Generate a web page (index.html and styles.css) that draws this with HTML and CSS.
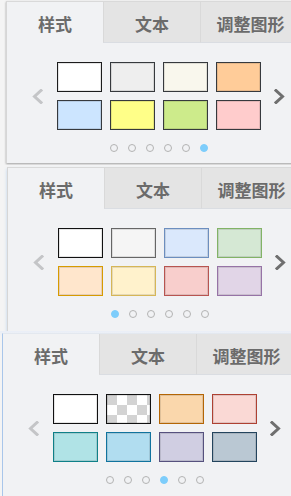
FILE: index.html
```html
<!DOCTYPE html>
<html>
<head>
    <meta charset="UTF-8">
    <meta name="viewport" content="width=device-width, initial-scale=1.0">
    <title>样式面板</title>
    <link rel="stylesheet" href="styles.css">
</head>
<body>

<!-- shot 1: page 6 of the style presets -->
<div class="shot shot-a">
    <div class="panel">
        <div class="tabs">
            <div class="tab active">样式</div>
            <div class="tab">文本</div>
            <div class="tab">调整图形</div>
        </div>
        <div class="styles">
            <span class="arrow prev"><svg width="11" height="15" viewBox="0 0 11 15"><polyline points="9,1.5 2.5,7.5 9,13.5"/></svg></span>
            <div class="swatches">
                <div class="swatch c-white"></div>
                <div class="swatch c-grey"></div>
                <div class="swatch c-cream"></div>
                <div class="swatch c-peach"></div>
                <div class="swatch c-sky"></div>
                <div class="swatch c-lemon"></div>
                <div class="swatch c-lime"></div>
                <div class="swatch c-rose"></div>
            </div>
            <span class="arrow next"><svg width="11" height="15" viewBox="0 0 11 15"><polyline points="2,1.5 8.5,7.5 2,13.5"/></svg></span>
        </div>
        <div class="dots">
            <span class="dot"></span><span class="dot"></span><span class="dot"></span>
            <span class="dot"></span><span class="dot"></span><span class="dot on"></span>
        </div>
    </div>
</div>

<!-- shot 2: page 1 -->
<div class="shot shot-b">
    <div class="panel">
        <div class="tabs">
            <div class="tab active">样式</div>
            <div class="tab">文本</div>
            <div class="tab">调整图形</div>
        </div>
        <div class="styles">
            <span class="arrow prev"><svg width="11" height="15" viewBox="0 0 11 15"><polyline points="9,1.5 2.5,7.5 9,13.5"/></svg></span>
            <div class="swatches">
                <div class="swatch d-white"></div>
                <div class="swatch d-grey"></div>
                <div class="swatch d-blue"></div>
                <div class="swatch d-green"></div>
                <div class="swatch d-orange"></div>
                <div class="swatch d-yellow"></div>
                <div class="swatch d-red"></div>
                <div class="swatch d-purple"></div>
            </div>
            <span class="arrow next"><svg width="11" height="15" viewBox="0 0 11 15"><polyline points="2,1.5 8.5,7.5 2,13.5"/></svg></span>
        </div>
        <div class="dots">
            <span class="dot on"></span><span class="dot"></span><span class="dot"></span>
            <span class="dot"></span><span class="dot"></span><span class="dot"></span>
        </div>
    </div>
</div>

<!-- shot 3: page 4 -->
<div class="shot shot-c">
    <div class="panel">
        <div class="tabs">
            <div class="tab active">样式</div>
            <div class="tab">文本</div>
            <div class="tab">调整图形</div>
        </div>
        <div class="styles">
            <span class="arrow prev"><svg width="11" height="15" viewBox="0 0 11 15"><polyline points="9,1.5 2.5,7.5 9,13.5"/></svg></span>
            <div class="swatches">
                <div class="swatch e-white"></div>
                <div class="swatch e-none"></div>
                <div class="swatch e-orange"></div>
                <div class="swatch e-red"></div>
                <div class="swatch e-teal"></div>
                <div class="swatch e-blue"></div>
                <div class="swatch e-violet"></div>
                <div class="swatch e-slate"></div>
            </div>
            <span class="arrow next"><svg width="11" height="15" viewBox="0 0 11 15"><polyline points="2,1.5 8.5,7.5 2,13.5"/></svg></span>
        </div>
        <div class="dots">
            <span class="dot"></span><span class="dot"></span><span class="dot"></span>
            <span class="dot on"></span><span class="dot"></span><span class="dot"></span>
        </div>
    </div>
</div>

</body>
</html>
```

FILE: styles.css
```css
html, body {
    margin: 0;
    padding: 0;
    overflow: hidden;
}

body {
    width: 291px;
    height: 496px;
    background: #f4f4f4;
    font-family: "Noto Sans CJK SC", "Noto Sans", sans-serif;
}

.shot {
    overflow: hidden;
}

.shot-a {
    height: 165px;
    padding: 1px 0 0 6px;
    box-sizing: border-box;
}

.shot-b {
    height: 166px;
    padding: 2px 0 0 7px;
    box-sizing: border-box;
}

.shot-c {
    height: 165px;
    padding: 2px 0 0 2px;
    box-sizing: border-box;
    background: linear-gradient(#e9eef7, #f4f4f4 6px);
}

.panel {
    width: 304px;
    background: #f1f2f4;
    border-top: 1px solid #d9d9d9;
    border-left: 1px solid #d6d6d6;
    box-sizing: border-box;
}

.shot-a .panel {
    height: 162px;
    box-shadow: 0 1px 2px rgba(0, 0, 0, 0.35);
}

.shot-b .panel {
    height: 164px;
    box-shadow: 0 2px 3px rgba(120, 170, 230, 0.45);
}

.shot-c .panel {
    height: 164px;
    border-left-color: #a9c6ea;
    border-top-color: #e3e8ef;
    border-bottom: 1px solid #a9c6ea;
}

/* tabs */
.tabs {
    display: flex;
    height: 41px;
}

.tab {
    width: 97px;
    flex: none;
    display: flex;
    align-items: center;
    justify-content: center;
    padding-top: 2px;
    box-sizing: border-box;
    font-size: 17px;
    font-weight: bold;
    color: #6b6b6b;
    background: #e4e4e4;
    border-left: 1px solid #d9d9d9;
    border-bottom: 1px solid #dadde2;
}

.tab.active {
    background: #f1f2f4;
    border-left: none;
    border-bottom: none;
    width: 96px;
}

.tab:last-child {
    width: 100px;
}

/* preset swatches */
.styles {
    display: flex;
    align-items: center;
    justify-content: center;
    gap: 13px;
    margin-top: 19px;
}

.arrow svg {
    display: block;
    fill: none;
    stroke-width: 3;
    stroke-linecap: square;
}

.arrow.prev {
    margin-right: 1px;
}

.arrow.prev svg {
    stroke: #c4c5c7;
}

.arrow.next svg {
    stroke: #6f6f6f;
}

.swatches {
    display: grid;
    grid-template-columns: repeat(4, 45px);
    grid-auto-rows: 30px;
    column-gap: 8px;
    row-gap: 8px;
}

.swatch {
    box-sizing: border-box;
    border: 1px solid #36393d;
    box-shadow: inset 0 0 0 1px rgba(0, 0, 0, 0.1);
}

.c-white { background: #ffffff; border-color: #1c1c1c; }
.c-grey { background: #eeeeee; }
.c-cream { background: #f9f7ed; }
.c-peach { background: #ffcc99; }
.c-sky { background: #cce5ff; }
.c-lemon { background: #ffff88; }
.c-lime { background: #cdeb8b; }
.c-rose { background: #ffcccc; }

.d-white { background: #ffffff; border-color: #111111; }
.d-grey { background: #f5f5f5; border-color: #666666; }
.d-blue { background: #dae8fc; border-color: #6c8ebf; }
.d-green { background: #d5e8d4; border-color: #82b366; }
.d-orange { background: #ffe6cc; border-color: #d79b00; }
.d-yellow { background: #fff2cc; border-color: #d6b656; }
.d-red { background: #f8cecc; border-color: #b85450; }
.d-purple { background: #e1d5e7; border-color: #9673a6; }

.e-white { background: #ffffff; border-color: #111111; }
.e-none {
    border-color: #111111;
    background-color: #ffffff;
    background-image: conic-gradient(#ffffff 25%, #d3d3d3 0 50%, #ffffff 0 75%, #d3d3d3 0);
    background-size: 20px 20px;
}
.e-orange { background: #fad7ac; border-color: #b46504; }
.e-red { background: #fad9d5; border-color: #ae4132; }
.e-teal { background: #b0e3e6; border-color: #0e8088; }
.e-blue { background: #b1ddf0; border-color: #10739e; }
.e-violet { background: #d0cee2; border-color: #56517e; }
.e-slate { background: #bac8d3; border-color: #23445d; }

/* page dots */
.dots {
    display: flex;
    justify-content: center;
    gap: 10px;
    margin-top: 14px;
    padding-left: 1px;
}

.dot {
    width: 8px;
    height: 8px;
    border-radius: 50%;
    border: 1px solid #b3b3b3;
    box-sizing: border-box;
}

.dot.on {
    background: #7dcdfb;
    border-color: #7dcdfb;
}
```
